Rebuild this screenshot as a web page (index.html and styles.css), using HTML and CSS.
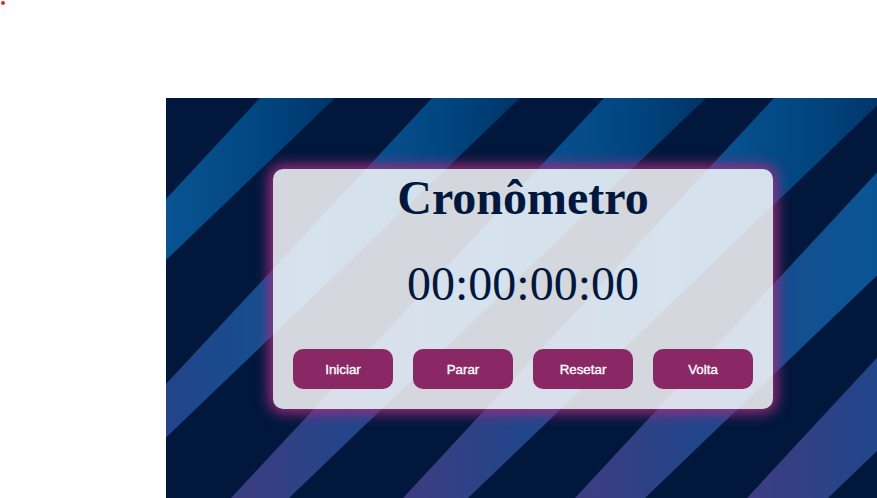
FILE: index.html
```html
<!DOCTYPE html>
<html lang="pt-BR">
<head>
<meta charset="utf-8">
<title>Cronômetro</title>
<link rel="stylesheet" href="styles.css">
</head>
<body>
<div class="dot"></div>
<main class="stage">
  <svg class="stripes" width="720" height="400" viewBox="0 0 720 400" aria-hidden="true">
    <defs>
      <linearGradient id="sg" x1="0" y1="0" x2="1" y2="0">
        <stop offset="0" stop-color="#3f3c80"/>
        <stop offset="0.25" stop-color="#22458a"/>
        <stop offset="0.6" stop-color="#0a5595"/>
        <stop offset="0.85" stop-color="#01457f"/>
        <stop offset="1" stop-color="#003468"/>
      </linearGradient>
    </defs>
    <rect width="720" height="400" fill="#01173c"/>
    <polygon fill="url(#sg)" points="94,0 169,0 -248,400 -278,400"/>
    <polygon fill="url(#sg)" points="266,0 354,0 -63,400 -106,400"/>
    <polygon fill="url(#sg)" points="438,0 540,0 123,400 65,400"/>
    <polygon fill="url(#sg)" points="608,0 719,0 302,400 237,400"/>
    <polygon fill="url(#sg)" points="780,0 896,0 479,400 409,400"/>
    <polygon fill="url(#sg)" points="952,0 1079,0 662,400 581,400"/>
  </svg>
  <div class="content">
    <section class="card">
      <h1 class="title">Cronômetro</h1>
      <div class="time">00:00:00:00</div>
      <div class="buttons">
        <button class="btn">Iniciar</button>
        <button class="btn">Parar</button>
        <button class="btn">Resetar</button>
        <button class="btn">Volta</button>
      </div>
    </section>
  </div>
</main>
</body>
</html>
```

FILE: styles.css
```css
html, body {
  margin: 0;
  padding: 0;
  background: #ffffff;
  overflow: hidden;
  height: 100%;
}

.dot {
  width: 4px;
  height: 4px;
  margin: 1px 0 0 1px;
  border-radius: 50%;
  background: #e8222c;
}

.stage {
  display: grid;
  width: 720px;
  height: 400px;
  margin: 93px 0 0 166px;
}

.stripes {
  grid-area: 1 / 1;
  display: block;
}

.content {
  grid-area: 1 / 1;
  padding: 71px 0 0 107px;
}

.card {
  box-sizing: border-box;
  width: 500px;
  height: 240px;
  padding: 1px 20px 20px;
  border-radius: 10px;
  background: rgba(255, 255, 255, 0.83);
  box-shadow: 0 0 14px 4px rgba(165, 44, 128, 0.95);
  display: flex;
  flex-direction: column;
  align-items: center;
  color: #01173c;
}

.title {
  margin: 0;
  font-family: "Liberation Serif", "Times New Roman", serif;
  font-weight: 700;
  font-size: 48px;
  line-height: normal;
}

.time {
  margin-top: 31px;
  font-family: "Liberation Serif", "Times New Roman", serif;
  font-size: 48px;
  line-height: normal;
}

.buttons {
  margin-top: auto;
  display: flex;
  gap: 20px;
}

.btn {
  width: 100px;
  height: 40px;
  border: 0;
  border-radius: 10px;
  background: #8a2866;
  color: #ffffff;
  font-family: "Liberation Sans", Arial, sans-serif;
  font-size: 13.333px;
  font-weight: 400;
  -webkit-text-stroke: 0.35px #ffffff;
  padding: 0;
}
```
